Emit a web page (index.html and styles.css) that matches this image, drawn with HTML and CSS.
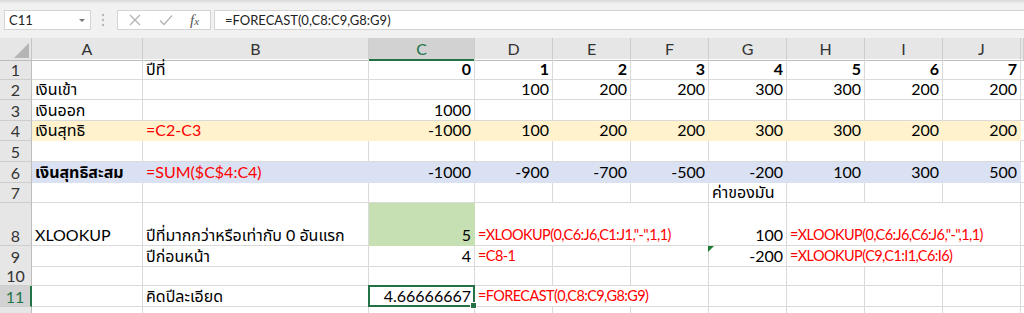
FILE: index.html
```html
<!DOCTYPE html>
<html lang="th">
<head>
    <meta charset="UTF-8">
    <title>XLOOKUP ปีที่เงินสุทธิสะสมเป็นบวก</title>
    <link rel="stylesheet" href="styles.css">
</head>
<body>
    <!-- แถบสูตร -->
    <div class="ribbon">
        <div class="namebox"><span>C11</span><span class="caret"></span></div>
        <svg class="grip" width="4" height="14" viewBox="0 0 4 14">
            <circle cx="2" cy="2" r="1.2"/><circle cx="2" cy="7" r="1.2"/><circle cx="2" cy="12" r="1.2"/>
        </svg>
        <div class="fxbox">
            <svg class="ico" width="12" height="12" viewBox="0 0 12 12">
                <path d="M1 1 L11 11 M11 1 L1 11"/>
            </svg>
            <svg class="ico" width="14" height="12" viewBox="0 0 14 12">
                <path d="M1 6.5 L5 10.5 L13 1.5"/>
            </svg>
            <span class="fx"><i>f</i><small>x</small></span>
        </div>
        <div class="formula">=FORECAST(0,C8:C9,G8:G9)</div>
    </div>

    <!-- ตาราง -->
    <div class="sheet">
        <div class="row head">
            <div class="corner"></div>
            <div class="hd">A</div><div class="hd">B</div><div class="hd sel">C</div><div class="hd">D</div>
            <div class="hd">E</div><div class="hd">F</div><div class="hd">G</div><div class="hd">H</div>
            <div class="hd">I</div><div class="hd">J</div><div class="hd"></div>
        </div>

        <div class="row">
            <div class="rn">1</div>
            <div class="c"></div><div class="c">ปีที่</div>
            <div class="c n b">0</div><div class="c n b">1</div><div class="c n b">2</div><div class="c n b">3</div>
            <div class="c n b">4</div><div class="c n b">5</div><div class="c n b">6</div><div class="c n b">7</div>
            <div class="c"></div>
        </div>

        <div class="row">
            <div class="rn">2</div>
            <div class="c">เงินเข้า</div><div class="c"></div><div class="c"></div>
            <div class="c n">100</div><div class="c n">200</div><div class="c n">200</div><div class="c n">300</div>
            <div class="c n">300</div><div class="c n">200</div><div class="c n">200</div>
            <div class="c"></div>
        </div>

        <div class="row">
            <div class="rn">3</div>
            <div class="c">เงินออก</div><div class="c"></div><div class="c n">1000</div>
            <div class="c"></div><div class="c"></div><div class="c"></div><div class="c"></div>
            <div class="c"></div><div class="c"></div><div class="c"></div>
            <div class="c"></div>
        </div>

        <div class="row yellow">
            <div class="rn">4</div>
            <div class="c">เงินสุทธิ</div><div class="c red">=C2-C3</div><div class="c n">-1000</div>
            <div class="c n">100</div><div class="c n">200</div><div class="c n">200</div><div class="c n">300</div>
            <div class="c n">300</div><div class="c n">200</div><div class="c n">200</div>
            <div class="c"></div>
        </div>

        <div class="row">
            <div class="rn">5</div>
            <div class="c"></div><div class="c"></div><div class="c"></div>
            <div class="c"></div><div class="c"></div><div class="c"></div><div class="c"></div>
            <div class="c"></div><div class="c"></div><div class="c"></div>
            <div class="c"></div>
        </div>

        <div class="row blue">
            <div class="rn">6</div>
            <div class="c b">เงินสุทธิสะสม</div><div class="c red">=SUM($C$4:C4)</div><div class="c n">-1000</div>
            <div class="c n">-900</div><div class="c n">-700</div><div class="c n">-500</div><div class="c n">-200</div>
            <div class="c n">100</div><div class="c n">300</div><div class="c n">500</div>
            <div class="c"></div>
        </div>

        <div class="row">
            <div class="rn">7</div>
            <div class="c"></div><div class="c"></div><div class="c"></div>
            <div class="c"></div><div class="c"></div><div class="c"></div><div class="c">ค่าของมัน</div>
            <div class="c"></div><div class="c"></div><div class="c"></div>
            <div class="c"></div>
        </div>

        <div class="row tall">
            <div class="rn">8</div>
            <div class="c">XLOOKUP</div><div class="c">ปีที่มากกว่าหรือเท่ากับ 0 อันแรก</div><div class="c n green">5</div>
            <div class="c red fml span3">=XLOOKUP(0,C6:J6,C1:J1,"-",1,1)</div>
            <div class="c n">100</div>
            <div class="c red fml span3">=XLOOKUP(0,C6:J6,C6:J6,"-",1,1)</div>
            <div class="c"></div>
        </div>

        <div class="row r20">
            <div class="rn">9</div>
            <div class="c"></div><div class="c">ปีก่อนหน้า</div><div class="c n">4</div>
            <div class="c red fml">=C8-1</div><div class="c"></div><div class="c"></div>
            <div class="c n flag">-200</div>
            <div class="c red fml span3">=XLOOKUP(C9,C1:I1,C6:I6)</div>
            <div class="c"></div>
        </div>

        <div class="row r20">
            <div class="rn">10</div>
            <div class="c"></div><div class="c"></div><div class="c"></div>
            <div class="c"></div><div class="c"></div><div class="c"></div><div class="c"></div>
            <div class="c"></div><div class="c"></div><div class="c"></div>
            <div class="c"></div>
        </div>

        <div class="row r21">
            <div class="rn sel">11</div>
            <div class="c"></div><div class="c">คิดปีละเอียด</div><div class="c n cur">4.66666667</div>
            <div class="c red fml span3">=FORECAST(0,C8:C9,G8:G9)</div>
            <div class="c"></div><div class="c"></div><div class="c"></div><div class="c"></div>
            <div class="c"></div>
        </div>

        <div class="row">
            <div class="rn">12</div>
            <div class="c"></div><div class="c"></div><div class="c"></div>
            <div class="c"></div><div class="c"></div><div class="c"></div><div class="c"></div>
            <div class="c"></div><div class="c"></div><div class="c"></div>
            <div class="c"></div>
        </div>
    </div>
</body>
</html>
```

FILE: styles.css
```css
body {
    margin: 0;
    background-color: #fff;
    font-family: Lato, "Noto Sans Thai", "Noto Sans Thai UI", sans-serif;
    overflow: hidden;
}

/* แถบสูตร */
.ribbon {
    height: 38px;
    box-sizing: border-box;
    padding-top: 10px;
    display: flex;
    align-items: flex-start;
    background: linear-gradient(#d9d9d9, #f1f1f1 4px);
}
.namebox {
    margin-left: 4px;
    width: 87px;
    height: 20px;
    box-sizing: border-box;
    border: 1px solid #d4d4d4;
    background-color: #fff;
    display: flex;
    align-items: center;
    padding: 0 5px 0 4px;
    font-size: 13px;
    color: #222;
}
.caret {
    margin-left: auto;
    border-left: 3px solid transparent;
    border-right: 3px solid transparent;
    border-top: 3px solid #777;
}
.grip {
    margin: 3px 0 0 10px;
    fill: #b8b8b8;
}
.fxbox {
    margin-left: 12px;
    width: 94px;
    height: 20px;
    box-sizing: border-box;
    border: 1px solid #d4d4d4;
    background-color: #fff;
    display: flex;
    align-items: center;
}
.ico {
    fill: none;
    stroke: #b4b4b4;
    stroke-width: 1.3;
}
.ico:first-child {
    margin-left: 11px;
}
.ico + .ico {
    margin-left: 18px;
}
.fx {
    margin-left: 17px;
    font-family: "Liberation Serif", serif;
    font-size: 15px;
    color: #555;
}
.fx small {
    font-size: 11px;
    font-style: italic;
}
.formula {
    flex: 1;
    margin-left: 3px;
    height: 20px;
    box-sizing: border-box;
    border: 1px solid #d4d4d4;
    border-right: none;
    background-color: #fff;
    padding-left: 10px;
    font-size: 13px;
    line-height: 18px;
    color: #222;
}

/* ตาราง */
.row {
    display: grid;
    grid-template-columns: 32px 111px 226px 106px repeat(7, 78px) 1fr;
    height: 20.6px;
}
.row.tall { height: 43px; }
.row.r20 { height: 20px; }
.row.r21 { height: 21px; }
.row.head {
    height: 21px;
    background-color: #e6e6e6;
}
.corner {
    position: relative;
    border-right: 1px solid #c6c6c6;
    border-bottom: 1px solid #bdbdbd;
}
.corner::after {
    content: '';
    position: absolute;
    right: 2px;
    bottom: 2px;
    border-left: 15px solid transparent;
    border-bottom: 15px solid #b5b5b5;
}
.hd {
    border-right: 1px solid #cdcdcd;
    border-bottom: 1px solid #bdbdbd;
    text-align: center;
    font-size: 16px;
    line-height: 21px;
    color: #333;
}
.hd.sel {
    background-color: #d2d2d2;
    color: #217346;
    border-bottom: 2px solid #217346;
}
.rn {
    background-color: #e6e6e6;
    border-right: 1px solid #bdbdbd;
    border-bottom: 1px solid #cdcdcd;
    display: flex;
    align-items: flex-end;
    justify-content: center;
    font-size: 16px;
    line-height: 19px;
    color: #333;
}
.rn.sel {
    background-color: #d2d2d2;
    color: #217346;
    border-right: 2px solid #217346;
}
.c {
    border-right: 1px solid #dadada;
    border-bottom: 1px solid #dadada;
    padding: 0 3px 1px;
    display: flex;
    align-items: flex-end;
    white-space: nowrap;
    overflow: hidden;
    font-size: 16px;
    line-height: 19px;
    color: #000;
}
.c.n { justify-content: flex-end; }
.c.b { font-weight: bold; }
.c.red { color: #ff0000; }
.c.fml {
    font-size: 14.5px;
    letter-spacing: -0.6px;
}
.c.span3 { grid-column: span 3; }
.c.green {
    background-color: #c6e0b4;
    border-color: #c6e0b4;
}
.yellow .c:not(:last-child) {
    background-color: #fff2cc;
    border-color: #fff2cc;
}
.blue .c:not(:last-child) {
    background-color: #d9e1f2;
    border-color: #d9e1f2;
}
.c.flag,
.c.cur {
    position: relative;
    overflow: visible;
}
.c.flag::before {
    content: '';
    position: absolute;
    left: -1px;
    top: 0;
    border-top: 6px solid #1e7b34;
    border-right: 6px solid transparent;
}
.c.cur::after {
    content: '';
    position: absolute;
    left: -1px;
    top: -1px;
    right: -1px;
    bottom: -1px;
    border: 2px solid #217346;
}
.c.cur::before {
    content: '';
    position: absolute;
    right: -3px;
    bottom: -3px;
    width: 5px;
    height: 5px;
    background-color: #217346;
    border: 1px solid #fff;
    z-index: 1;
}
```
